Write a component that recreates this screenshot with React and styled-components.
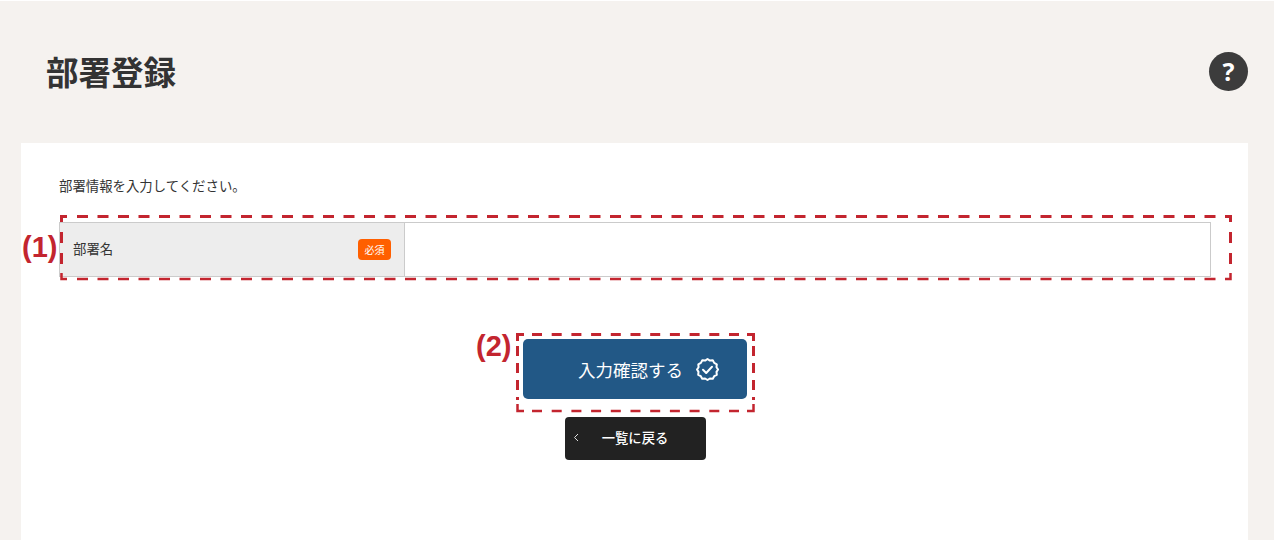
import React from "react";
import styled, { createGlobalStyle } from "styled-components";

const Global = createGlobalStyle`
  html, body { margin: 0; padding: 0; height: 100%; background: #fff; overflow: hidden; }
  body { font-family: "Liberation Sans", "Noto Sans CJK JP", sans-serif; color: #333; }
  * { box-sizing: border-box; }
`;
const Page = styled.div`
  position: relative; width: 1274px; height: 540px; display: flex; flex-direction: column;
  background: #f5f2ef; border-top: 1px solid #fff; overflow: hidden;
`;
const Tick = styled.i`
  position: absolute; top: -1px; left: ${p => p.$x}px; width: 1px; height: 1px; background: #bbb;
`;
const Header = styled.header`
  height: 142px; flex: none; display: flex; align-items: flex-start; justify-content: space-between;
  padding: 51px 26px 0 46px;
`;
const Title = styled.h1`
  margin: -3px 0 0; font-size: 32.5px; line-height: 44px; font-weight: 700; color: #333;
  font-family: "Noto Sans CJK JP", sans-serif;
`;
const Help = styled.button`
  width: 39px; height: 39px; border: 0; border-radius: 50%; background: #3c3c3c; color: #fff; padding: 0;
  font: 700 25px/39px "Noto Sans", sans-serif;
`;
const Panel = styled.main`
  flex: 1; margin: 0 26px 0 21px; background: #fff; padding: 33px 37px 0 38px;
  display: flex; flex-direction: column;
`;
const Lead = styled.p`
  margin: 0; font-size: 13.4px; line-height: 18px; color: #333; font-family: "Noto Sans CJK JP", sans-serif;
`;
const Annotated = styled.div`position: relative;`;
const Frame = styled.svg`
  position: absolute; overflow: visible; pointer-events: none; z-index: 1;
  top: ${p => p.$top}px; left: ${p => p.$left}px;
`;
const Marker = styled.span`
  position: absolute; top: ${p => p.$top}px; left: ${p => p.$left}px;
  font: 700 29px/30px "Liberation Sans", sans-serif; color: #c3252f;
`;
const FormRow = styled.div`
  margin-top: 28px; height: 55px; display: flex; border: 1px solid #cbcbcb; background: #fff;
`;
const LabelCell = styled.div`
  width: 345px; flex: none; background: #ededed; border-right: 1px solid #cbcbcb;
  display: flex; align-items: center; justify-content: space-between; padding: 0 13px;
  font: 13.4px "Noto Sans CJK JP", sans-serif; color: #333;
`;
const LabelText = styled.span`margin-top: -4px;`;
const Required = styled.span`
  width: 33px; height: 21px; border-radius: 4px; background: #ff5f00; color: #fff;
  font-size: 10px; line-height: 21px; text-align: center; margin-top: -1px;
`;
const Input = styled.input`flex: 1; border: 0; outline: 0; background: transparent;`;
const Actions = styled.div`margin-top: 62px; display: flex; flex-direction: column; align-items: center; gap: 18px;`;
const Primary = styled.button`
  width: 224px; height: 60px; border: 0; border-radius: 5px; background: #225886; color: #fff;
  font: 17.5px "Noto Sans CJK JP", sans-serif; display: flex; align-items: center; justify-content: flex-end; gap: 12px; padding: 0 27px 0 0;
`;
const Back = styled.button`
  position: relative; width: 141px; height: 43px; border: 0; border-radius: 4px; background: #222; color: #fff; margin-left: 1px;
  font: 500 13.3px "Noto Sans CJK JP", sans-serif; display: flex; align-items: center; justify-content: center; padding: 0 1px 2px 0;
`;
const Chevron = styled.svg`position: absolute; left: 8px; top: 16px;`;

function Dashes({ top, left, w, h, hStart, hDash, hGap, vStart, vDash, vGap, leg }) {
  const t = 1.5, b = h - 1, l = 1.5, r = w - 1.5;
  const c = "#c3252f";
  return (
    <Frame $top={top} $left={left} width={w} height={h} viewBox={`0 0 ${w} ${h}`} fill="none" stroke={c}>
      <path strokeWidth="3" d={`M${l} ${leg}V${t}H${leg}M${r - leg + 1.5} ${t}H${r}V${leg}`} />
      <path strokeWidth="2.5" d={`M${l} ${h - leg}V${b}H${leg}M${r - leg + 1.5} ${b}H${r}V${h - leg}`} />
      <path strokeWidth="3" strokeDasharray={`${hDash} ${hGap}`} d={`M${hStart} ${t}H${w - hStart + 1}`} />
      <path strokeWidth="2.5" strokeDasharray={`${hDash} ${hGap}`} d={`M${hStart} ${b}H${w - hStart + 1}`} />
      <path strokeWidth="3" strokeDasharray={`${vDash} ${vGap}`} d={`M${l} ${vStart}V${h - vStart + 1}M${r} ${vStart}V${h - vStart + 1}`} />
    </Frame>
  );
}

export default function App() {
  return (
    <Page>
      <Global />
      <Tick $x={999} />
      <Tick $x={1147} />
      <Header>
        <Title>部署登録</Title>
        <Help>?</Help>
      </Header>
      <Panel>
        <Lead>部署情報を入力してください。</Lead>
        <Annotated>
          <Dashes top={21} left={1} w={1172} h={65} hStart={17} hDash={11} hGap={9.5} vStart={17} vDash={11} vGap={10} leg={7} />
          <Marker $top={38} $left={-37}>(1)</Marker>
          <FormRow>
            <LabelCell><LabelText>部署名</LabelText><Required>必須</Required></LabelCell>
            <Input aria-label="部署名" />
          </FormRow>
        </Annotated>
        <Actions>
          <Annotated>
            <Dashes top={-6} left={-7} w={239} h={79} hStart={16} hDash={10} hGap={9.7} vStart={13} vDash={10} vGap={7} leg={8} />
            <Marker $top={-8} $left={-47}>(2)</Marker>
            <Primary>
              入力確認する
              <svg width="25" height="25" viewBox="0 0 25 25" fill="none" stroke="#fff" strokeWidth="2" strokeLinecap="round" strokeLinejoin="round">
                <path d="M12.5 2l2.4 1.6 2.9-.3 1.4 2.6 2.6 1.4-.3 2.9 1.6 2.3-1.6 2.4.3 2.9-2.6 1.4-1.4 2.6-2.9-.3-2.4 1.5-2.4-1.5-2.9.3-1.4-2.6-2.6-1.4.3-2.9L2 12.5l1.6-2.3-.3-2.9 2.6-1.4 1.4-2.6 2.9.3z" />
                <path d="M8 12.8l3.2 3.2 5.8-6.2" />
              </svg>
            </Primary>
          </Annotated>
          <Back>
            <Chevron width="6" height="9" viewBox="0 0 6 9" fill="none" stroke="#ddd" strokeWidth="1"><path d="M5 1L1.5 4.5 5 8" /></Chevron>
            一覧に戻る
          </Back>
        </Actions>
      </Panel>
    </Page>
  );
}
